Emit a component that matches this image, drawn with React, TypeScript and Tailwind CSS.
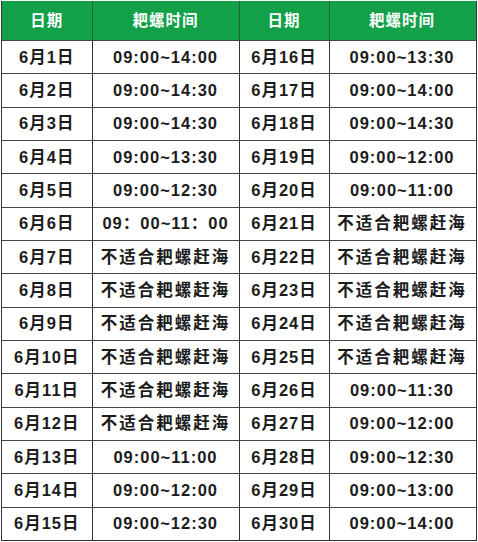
import React from "react";

const rows: [string, string, string, string][] = [
  ["6月1日", "09:00~14:00", "6月16日", "09:00~13:30"],
  ["6月2日", "09:00~14:30", "6月17日", "09:00~14:00"],
  ["6月3日", "09:00~14:30", "6月18日", "09:00~14:30"],
  ["6月4日", "09:00~13:30", "6月19日", "09:00~12:00"],
  ["6月5日", "09:00~12:30", "6月20日", "09:00~11:00"],
  ["6月6日", "09：00~11：00", "6月21日", "不适合耙螺赶海"],
  ["6月7日", "不适合耙螺赶海", "6月22日", "不适合耙螺赶海"],
  ["6月8日", "不适合耙螺赶海", "6月23日", "不适合耙螺赶海"],
  ["6月9日", "不适合耙螺赶海", "6月24日", "不适合耙螺赶海"],
  ["6月10日", "不适合耙螺赶海", "6月25日", "不适合耙螺赶海"],
  ["6月11日", "不适合耙螺赶海", "6月26日", "09:00~11:30"],
  ["6月12日", "不适合耙螺赶海", "6月27日", "09:00~12:00"],
  ["6月13日", "09:00~11:00", "6月28日", "09:00~12:30"],
  ["6月14日", "09:00~12:00", "6月29日", "09:00~13:00"],
  ["6月15日", "09:00~12:30", "6月30日", "09:00~14:00"],
];

const cols = "grid grid-cols-[89.5px_147px_90px_146px]";
const font = { fontFamily: '"Liberation Sans", "Noto Sans CJK SC", sans-serif' };

function Cell({ text, first }: { text: string; first?: boolean }) {
  const cjk = text.startsWith("不");
  return (
    <div
      className={`flex items-center justify-center ${first ? "" : "border-l-[1.5px] border-[#333]"} ${
        cjk ? "tracking-[2px]" : "tracking-[1px]"
      }`}
    >
      {text}
    </div>
  );
}

export default function App() {
  return (
    <div className="w-[478px] h-[542px] bg-white pl-[1px] pt-[1px]" style={font}>
      <div className="w-[476px] border-[1.5px] border-[#333] border-t-0">
        <div className={`${cols} h-[39px] bg-[#12a049] text-white font-bold text-[15.5px] tracking-[1px]`}>
          <div className="flex items-center justify-center">日期</div>
          <div className="flex items-center justify-center border-l-[1.5px] border-[#2d5a3a]">耙螺时间</div>
          <div className="flex items-center justify-center border-l-[1.5px] border-[#2d5a3a]">日期</div>
          <div className="flex items-center justify-center border-l-[1.5px] border-[#2d5a3a]">耙螺时间</div>
        </div>
        {rows.map((r, i) => (
          <div
            key={i}
            className={`${cols} h-[33.33px] border-t-[1.5px] border-[#444] text-[#1c1c1c] font-bold text-[16.5px]`}
          >
            <Cell text={r[0]} first />
            <Cell text={r[1]} />
            <Cell text={r[2]} />
            <Cell text={r[3]} />
          </div>
        ))}
      </div>
    </div>
  );
}
